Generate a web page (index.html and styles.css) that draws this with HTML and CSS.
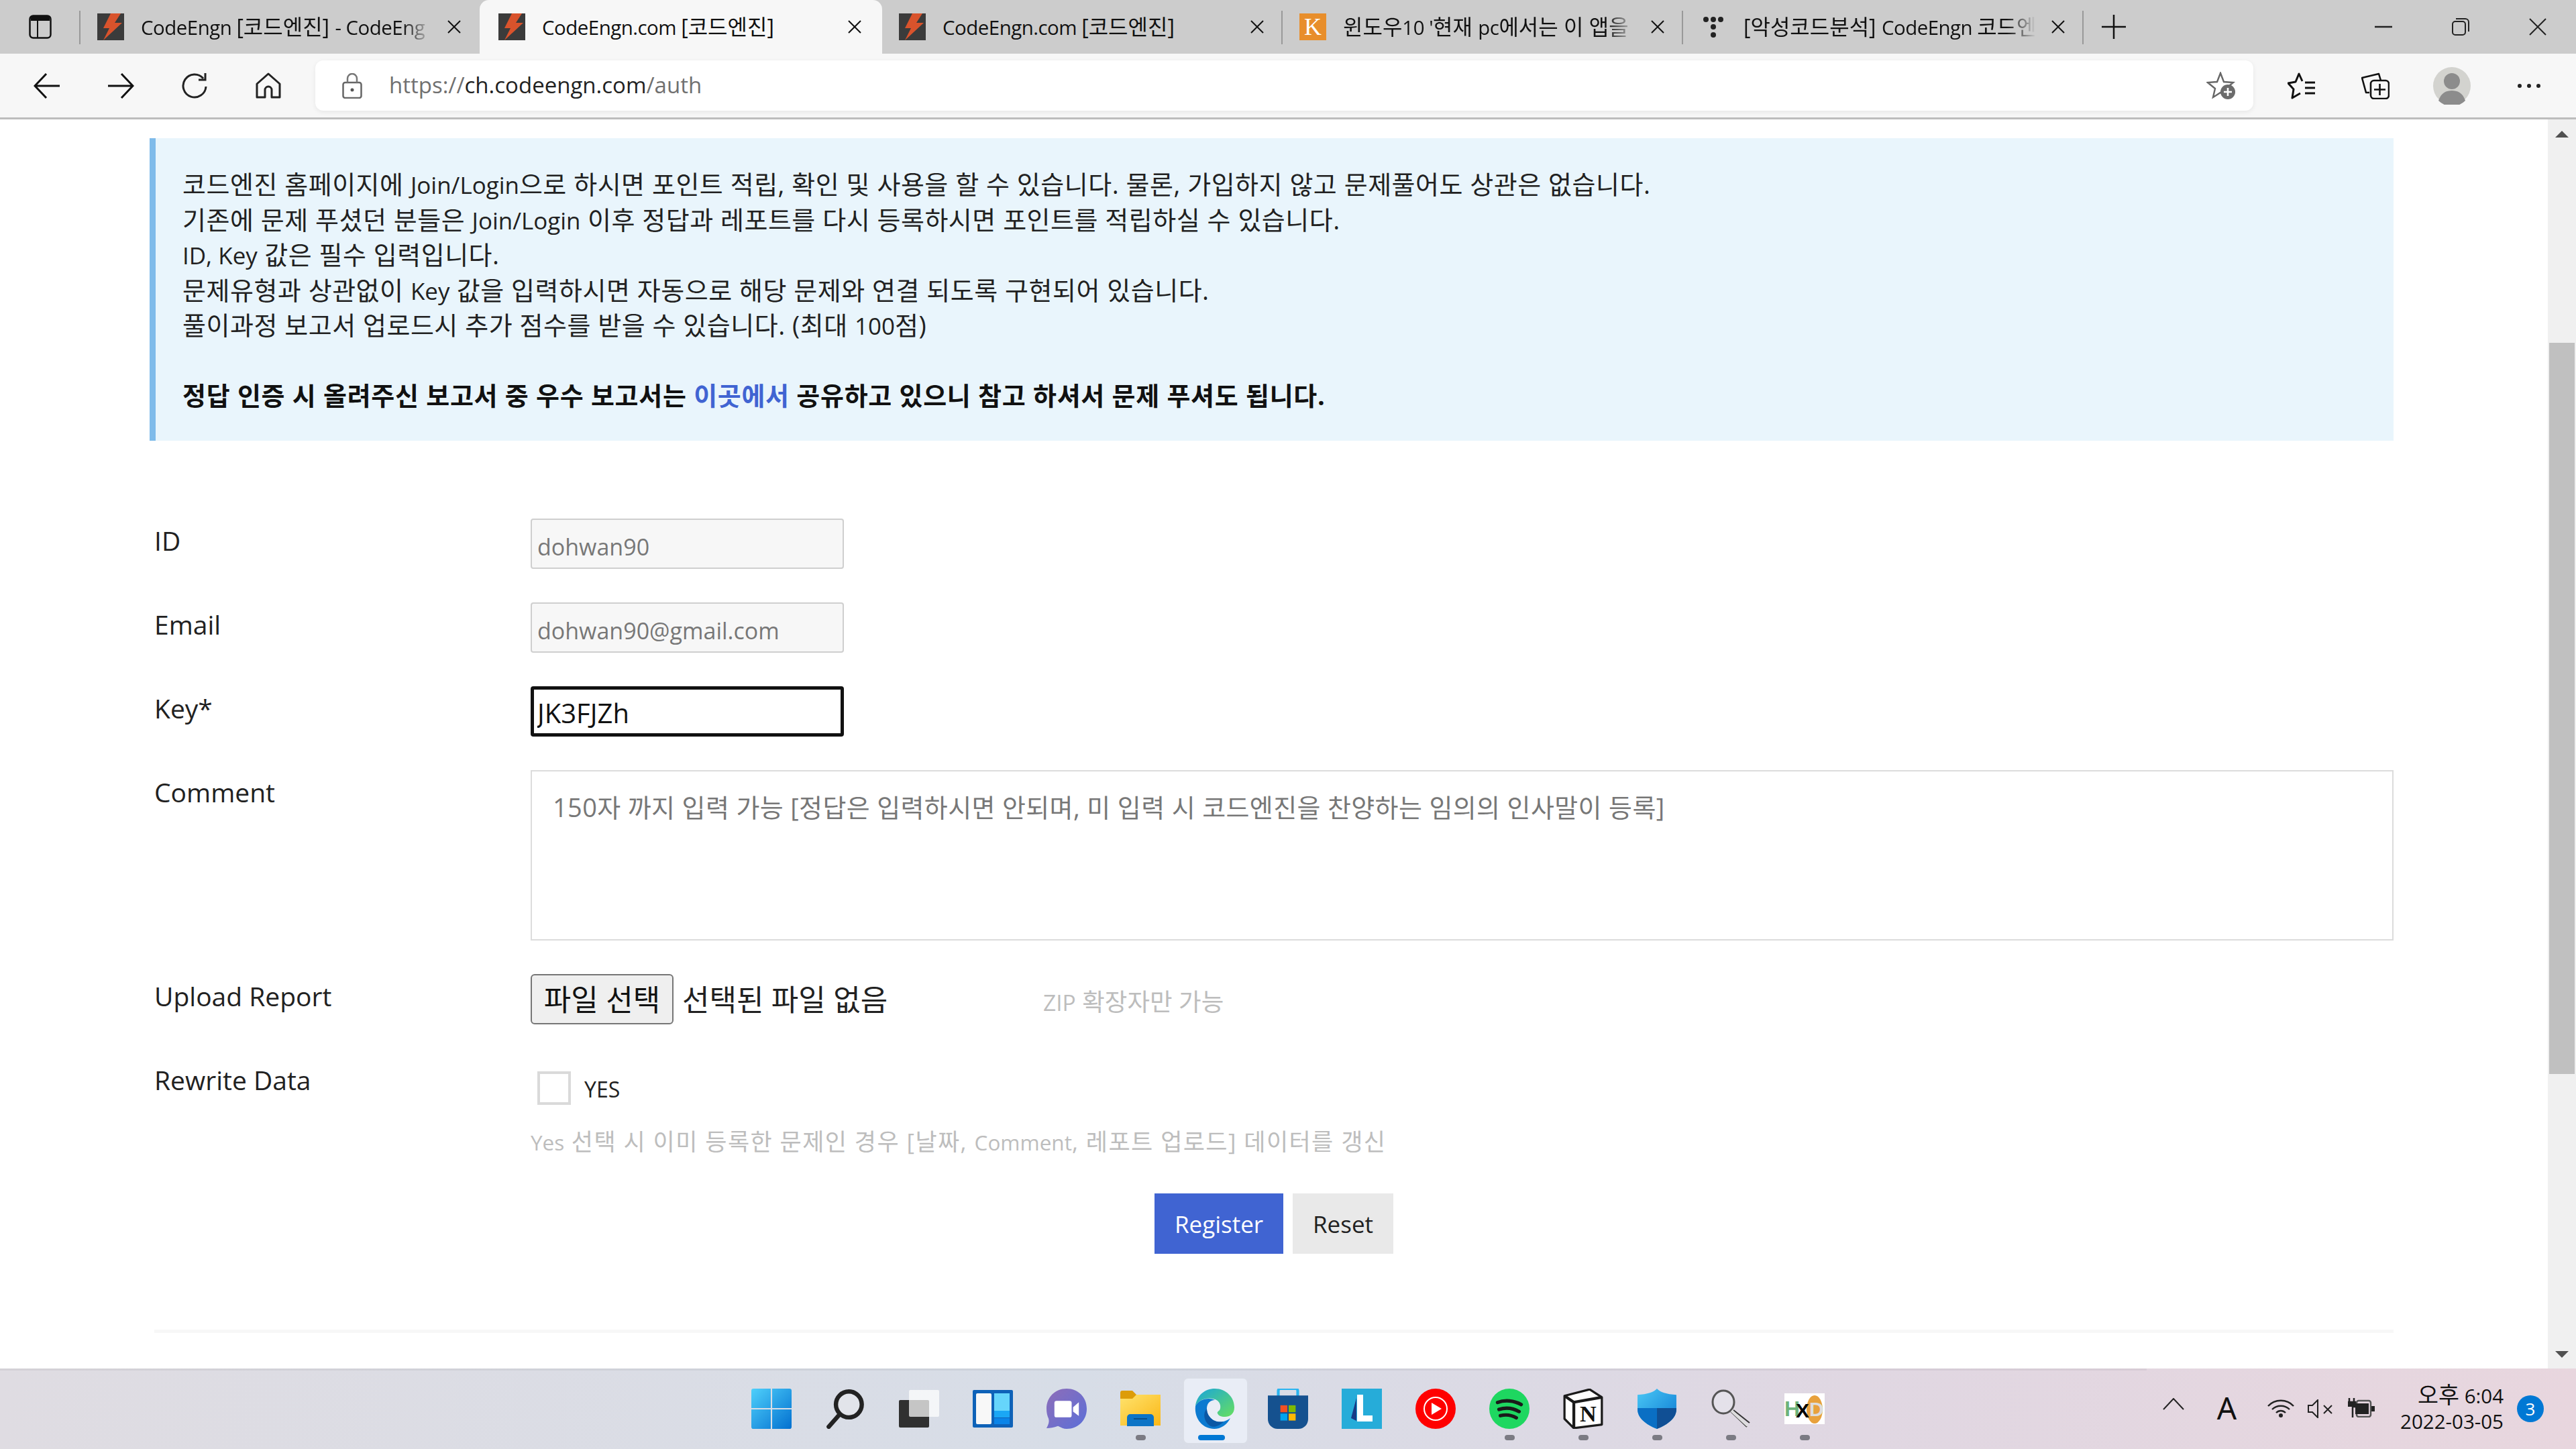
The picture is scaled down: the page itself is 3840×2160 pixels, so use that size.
FILE: index.html
```html
<!DOCTYPE html>
<html lang="ko">
<head>
<meta charset="utf-8">
<title>CodeEngn.com [코드엔진]</title>
<link rel="stylesheet" href="styles.css">
</head>
<body>
<svg class="defs" width="0" height="0">
  <defs>
    <symbol id="ce" viewBox="0 0 40 40"><rect width="40" height="40" fill="#3b3b3b"/><path d="M20 0H35L26 14H37L9 40L18 22H9Z" fill="#d9532c"/></symbol>
    <symbol id="x" viewBox="0 0 22 20"><path d="M2 1L20 19M20 1L2 19" stroke="#111" stroke-width="2" fill="none"/></symbol>
    <linearGradient id="gStart" x1="0" y1="0" x2="1" y2="1"><stop offset="0" stop-color="#4fd0fb"/><stop offset="1" stop-color="#0270d0"/></linearGradient>
    <linearGradient id="gChat" x1="0" y1="0" x2="1" y2="1"><stop offset="0" stop-color="#8e6db8"/><stop offset="1" stop-color="#5b6fd8"/></linearGradient>
    <linearGradient id="gFolder" x1="0" y1="0" x2="1" y2="1"><stop offset="0" stop-color="#fee36e"/><stop offset="1" stop-color="#fbb716"/></linearGradient>
    <linearGradient id="gEdge" x1="0" y1="0" x2="1" y2="1"><stop offset="0" stop-color="#1aa5db"/><stop offset="1" stop-color="#66df5f"/></linearGradient>
    <linearGradient id="gShield" x1="0" y1="0" x2="1" y2="1"><stop offset="0" stop-color="#4bc8f5"/><stop offset="1" stop-color="#0a78d2"/></linearGradient>
  </defs>
</svg>

<header class="tabstrip">
  <div class="side">
    <svg class="i34" viewBox="0 0 34 36"><rect x="1.5" y="1.5" width="31" height="33" rx="5" fill="none" stroke="#111" stroke-width="2.5"/><path d="M3 8V5a3 3 0 0 1 3-3H28a3 3 0 0 1 3 3V9H3Z" fill="#111"/><path d="M13 9V34" stroke="#111" stroke-width="2"/></svg>
  </div>
  <div class="tab tab-first sep-left">
    <svg class="fav"><use href="#ce"/></svg>
    <span class="tab-title fade"><span class="la">CodeEngn </span>[코드엔진] <span class="la">- CodeEng</span></span>
    <svg class="tab-x"><use href="#x"/></svg>
  </div>
  <div class="tab active">
    <svg class="fav"><use href="#ce"/></svg>
    <span class="tab-title"><span class="la">CodeEngn.com </span>[코드엔진]</span>
    <svg class="tab-x"><use href="#x"/></svg>
  </div>
  <div class="tab sep-right">
    <svg class="fav"><use href="#ce"/></svg>
    <span class="tab-title"><span class="la">CodeEngn.com </span>[코드엔진]</span>
    <svg class="tab-x"><use href="#x"/></svg>
  </div>
  <div class="tab sep-right">
    <svg class="fav" viewBox="0 0 40 40"><rect width="40" height="40" fill="#e88e2b"/><text x="20" y="32" text-anchor="middle" class="k-glyph">K</text></svg>
    <span class="tab-title fade">윈도우<span class="la">10 '</span>현재 <span class="la">pc</span>에서는 이 앱을</span>
    <svg class="tab-x"><use href="#x"/></svg>
  </div>
  <div class="tab sep-right">
    <svg class="fav" viewBox="0 0 40 40"><g fill="#222"><circle cx="9" cy="9" r="4"/><circle cx="20" cy="9" r="4"/><circle cx="31" cy="9" r="4"/><circle cx="20" cy="20" r="4"/><circle cx="20" cy="32" r="4"/></g></svg>
    <span class="tab-title fade">[악성코드분석] <span class="la">CodeEngn </span>코드엔</span>
    <svg class="tab-x"><use href="#x"/></svg>
  </div>
  <svg class="newtab" viewBox="0 0 36 36"><path d="M18 0V36M0 18H36" stroke="#111" stroke-width="2.5"/></svg>
  <div class="win">
    <svg class="win-i" viewBox="0 0 26 26"><path d="M0 13H26" stroke="#222" stroke-width="2.5"/></svg>
    <svg class="win-i" viewBox="0 0 26 26"><rect x="1" y="5" width="19" height="20" rx="4" fill="none" stroke="#222" stroke-width="2"/><path d="M6 1H20a5 5 0 0 1 5 5V20" fill="none" stroke="#222" stroke-width="2"/></svg>
    <svg class="win-i" viewBox="0 0 26 26"><path d="M1 1L25 25M25 1L1 25" stroke="#222" stroke-width="2"/></svg>
  </div>
</header>

<nav class="toolbar">
  <div class="tb-btn"><svg class="i40" viewBox="0 0 40 40"><path d="M19 2L2 20L19 38M2 20H39" fill="none" stroke="#111" stroke-width="3"/></svg></div>
  <div class="tb-btn"><svg class="i40" viewBox="0 0 40 40"><path d="M21 2L38 20L21 38M38 20H1" fill="none" stroke="#111" stroke-width="3"/></svg></div>
  <div class="tb-btn"><svg class="i40" viewBox="0 0 40 40"><path d="M33 9A17 17 0 1 0 37 21" fill="none" stroke="#222" stroke-width="3"/><path d="M36 1V11H26" fill="none" stroke="#222" stroke-width="3"/></svg></div>
  <div class="tb-btn"><svg class="i40" viewBox="0 0 40 40"><path d="M20 2L3 17V37H15V26a5 5 0 0 1 10 0V37H37V17Z" fill="none" stroke="#222" stroke-width="3" stroke-linejoin="round"/></svg></div>
  <div class="urlbar">
    <svg class="lock" viewBox="0 0 30 38"><rect x="1.5" y="14" width="27" height="23" rx="3" fill="none" stroke="#666" stroke-width="2.5"/><path d="M8 14V8a7 7 0 0 1 14 0V14" fill="none" stroke="#777" stroke-width="2.5"/><circle cx="15" cy="25" r="2.5" fill="#555"/></svg>
    <span class="url"><span class="dim">https://</span>ch.codeengn.com<span class="dim">/auth</span></span>
    <svg class="star-add" viewBox="0 0 44 42"><path d="M21 2L26 15L40 16L29 25L32 38L21 31L10 38L13 25L2 16L16 15Z" fill="none" stroke="#666" stroke-width="2.4"/><circle cx="32" cy="30" r="11" fill="#6b6b6b"/><path d="M32 24V36M26 30H38" stroke="#fff" stroke-width="2.6"/></svg>
  </div>
  <div class="tb-btn"><svg class="i42" viewBox="0 0 42 40"><path d="M22 13L17 2L12 14L1 16L9 25L7 38L19 31" fill="none" stroke="#111" stroke-width="3" stroke-linejoin="round"/><path d="M26 15H41M26 23H41M26 31H41" stroke="#111" stroke-width="3"/></svg></div>
  <div class="tb-btn"><svg class="i42" viewBox="0 0 42 40"><path d="M12 30H7L1 8L26 2L29 12" fill="none" stroke="#111" stroke-width="2.6" stroke-linejoin="round"/><rect x="14" y="12" width="27" height="27" rx="5" fill="#f7f7f7" stroke="#111" stroke-width="2.6"/><path d="M27.500 17V34M19 25.500H36" stroke="#111" stroke-width="2.6"/></svg></div>
  <div class="tb-btn person"><svg class="avatar" viewBox="0 0 56 56"><circle cx="28" cy="28" r="28" fill="#d3d3cf"/><circle cx="28" cy="21" r="12" fill="#8c8c8c"/><path d="M8 50C12 38 20 35 28 35S44 38 48 50A28 28 0 0 1 8 50Z" fill="#8c8c8c"/></svg></div>
  <div class="tb-btn more"><svg class="dots" viewBox="0 0 36 8"><g fill="#222"><circle cx="4" cy="4" r="3"/><circle cx="18" cy="4" r="3"/><circle cx="32" cy="4" r="3"/></g></svg></div>
</nav>

<div class="viewport">
  <main class="page">
    <section class="notice">
      <p>코드엔진 홈페이지에 <span class="la">Join/Login</span>으로 하시면 포인트 적립, 확인 및 사용을 할 수 있습니다. 물론, 가입하지 않고 문제풀어도 상관은 없습니다.</p>
      <p>기존에 문제 푸셨던 분들은 <span class="la">Join/Login</span> 이후 정답과 레포트를 다시 등록하시면 포인트를 적립하실 수 있습니다.</p>
      <p><span class="la">ID, Key</span> 값은 필수 입력입니다.</p>
      <p>문제유형과 상관없이 <span class="la">Key</span> 값을 입력하시면 자동으로 해당 문제와 연결 되도록 구현되어 있습니다.</p>
      <p>풀이과정 보고서 업로드시 추가 점수를 받을 수 있습니다. (최대 <span class="la">100</span>점)</p>
      <p class="notice-gap"><strong>정답 인증 시 올려주신 보고서 중 우수 보고서는 <a class="link">이곳에서</a> 공유하고 있으니 참고 하셔서 문제 푸셔도 됩니다.</strong></p>
    </section>

    <form class="form">
      <label class="lbl">ID</label>
      <input class="field ro" type="text" value="dohwan90" readonly>
      <label class="lbl">Email</label>
      <input class="field ro" type="text" value="dohwan90@gmail.com" readonly>
      <label class="lbl">Key*</label>
      <input class="field focus" type="text" value="JK3FJZh">
      <label class="lbl">Comment</label>
      <textarea class="comment" placeholder="150자 까지 입력 가능 [정답은 입력하시면 안되며, 미 입력 시 코드엔진을 찬양하는 임의의 인사말이 등록]"></textarea>
      <label class="lbl">Upload Report</label>
      <div class="upload">
        <span class="file-btn">파일 선택</span>
        <span class="file-none">선택된 파일 없음</span>
        <span class="hint zip"><span class="la">ZIP</span> 확장자만 가능</span>
      </div>
      <label class="lbl">Rewrite Data</label>
      <div class="rewrite">
        <div class="check-row"><span class="check"></span><span class="yes">YES</span></div>
        <div class="hint help"><span class="la">Yes</span> 선택 시 이미 등록한 문제인 경우 [날짜, <span class="la">Comment</span>, 레포트 업로드] 데이터를 갱신</div>
      </div>
    </form>

    <div class="actions">
      <span class="btn primary">Register</span>
      <span class="btn plain">Reset</span>
    </div>
    <hr class="rule">
  </main>
  <aside class="scrollbar">
    <span class="arrow up"></span>
    <span class="thumb"></span>
    <span class="arrow down"></span>
  </aside>
</div>

<footer class="taskbar">
  <div class="apps">
    <div class="app"><svg class="ico" viewBox="0 0 58 58"><path d="M0 3a3 3 0 0 1 3-3H28V28H0ZM30 0H55a3 3 0 0 1 3 3V28H30ZM0 30H28V58H3a3 3 0 0 1-3-3ZM30 30H58V55a3 3 0 0 1-3 3H30Z" fill="url(#gStart)"/></svg></div>
    <div class="app"><svg class="ico" viewBox="0 0 56 56"><circle cx="33" cy="22" r="18" fill="#e2e4ea" stroke="#222" stroke-width="6"/><path d="M20 36L5 53" stroke="#222" stroke-width="6" stroke-linecap="round"/></svg></div>
    <div class="app"><svg class="ico" viewBox="0 0 60 56"><rect x="0" y="15" width="45" height="41" rx="2" fill="#303030"/><rect x="15" y="0" width="45" height="40" rx="2" fill="#fff" fill-opacity=".72"/></svg></div>
    <div class="app"><svg class="ico" viewBox="0 0 60 56"><rect width="60" height="56" rx="2" fill="#0e62b8"/><rect x="5" y="5" width="23" height="46" rx="2" fill="#f8f8f8"/><rect x="32" y="5" width="23" height="26" fill="#66d5fb"/><rect x="32" y="31" width="23" height="10" fill="#1aa7f5"/><rect x="32" y="42" width="23" height="9" fill="#0a84e8"/></svg></div>
    <div class="app"><svg class="ico" viewBox="0 0 56 56"><path d="M28 0C44 0 56 12 56 28S44 56 28 56C24 56 20 54 16 52C10 54 5 55 0 55C3 50 4 46 3 42C1 38 0 33 0 28C0 12 12 0 28 0Z" fill="url(#gChat)"/><rect x="11" y="17" width="24" height="23" rx="3" fill="#fff"/><path d="M37 26L45 19V38L37 32Z" fill="#fff"/></svg></div>
    <div class="app"><svg class="ico" viewBox="0 0 60 54"><path d="M0 3a3 3 0 0 1 3-3H18L24 6H60V50H0Z" fill="#dd9c08"/><path d="M0 12H18L24 6H60V52H0Z" fill="url(#gFolder)"/><path d="M10 53V40a5 5 0 0 1 5-5H45a5 5 0 0 1 5 5V53Z" fill="#0c74c6"/><path d="M20 42H40" stroke="#094e8a" stroke-width="2"/></svg><span class="dot"></span></div>
    <div class="app current"><svg class="ico" viewBox="0 0 60 60"><path d="M2 26C4 10 16 0 31 0C48 0 60 13 60 28C60 38 53 42 46 42C40 42 36 40 35 37C34 35 36 34 38 32C40 29 40 22 35 18C28 13 10 12 2 26Z" fill="url(#gEdge)"/><path d="M2 26C8 14 24 13 31 17C24 17 19 22 19 30C19 42 30 52 44 49C47 48 50 47 54 44C49 54 40 60 30 60C14 60 0 46 2 26Z" fill="#0c7ad0"/><path d="M19 30C19 42 30 52 44 49C38 56 28 59 23 55C14 48 13 36 19 30Z" fill="#0b57a4"/></svg><span class="dot live"></span></div>
    <div class="app"><svg class="ico" viewBox="0 0 58 58"><path d="M15 12V3a3 3 0 0 1 3-3H40a3 3 0 0 1 3 3V12" fill="none" stroke="#2ab4f0" stroke-width="4"/><path d="M0 10H58V44a14 14 0 0 1-14 14H14A14 14 0 0 1 0 44Z" fill="#15518f"/><rect x="18" y="24" width="10" height="10" fill="#f25022"/><rect x="30" y="24" width="10" height="10" fill="#7fba00"/><rect x="18" y="36" width="10" height="10" fill="#00a4ef"/><rect x="30" y="36" width="10" height="10" fill="#ffb900"/></svg></div>
    <div class="app"><svg class="ico" viewBox="0 0 60 60"><rect width="60" height="60" fill="#26acd9"/><path d="M14 44L22 14V48Z" fill="#173a86"/><path d="M23 9H32V40H46V49H23Z" fill="#fff"/></svg></div>
    <div class="app"><svg class="ico" viewBox="0 0 60 60"><circle cx="30" cy="30" r="30" fill="#f00"/><circle cx="30" cy="30" r="17" fill="none" stroke="#fff" stroke-width="2"/><path d="M24 21L39 30L24 39Z" fill="#fff"/></svg></div>
    <div class="app"><svg class="ico" viewBox="0 0 58 58"><circle cx="29" cy="29" r="29" fill="#1ed760"/><path d="M12 20C22 16 36 17 46 23M14 30C23 27 34 28 43 33M16 39C24 37 32 38 39 42" fill="none" stroke="#1a1a1a" stroke-width="5" stroke-linecap="round"/></svg><span class="dot"></span></div>
    <div class="app"><svg class="ico" viewBox="0 0 54 56"><path d="M1 10L36 1L53 12V50L14 55L1 42Z" fill="#fff" stroke="#1a1a1a" stroke-width="3" stroke-linejoin="round"/><path d="M1 10L14 19L53 12M14 19V55" fill="none" stroke="#1a1a1a" stroke-width="4"/><text x="34" y="46" text-anchor="middle" class="notion-n">N</text></svg><span class="dot"></span></div>
    <div class="app"><svg class="ico" viewBox="0 0 56 58"><path d="M28 0C32 5 42 8 56 9V30C56 42 44 52 28 58C12 52 0 42 0 30V9C14 8 24 5 28 0Z" fill="url(#gShield)"/><path d="M0 28H28V58C12 52 0 42 0 30Z" fill="#0a6fc4"/><path d="M28 28H56V30C56 42 44 52 28 58Z" fill="#104f94"/></svg><span class="dot"></span></div>
    <div class="app"><svg class="ico" viewBox="0 0 60 58"><ellipse cx="19" cy="19" rx="16" ry="17" fill="#e8e8ee" fill-opacity=".6" stroke="#555" stroke-width="3"/><path d="M30 33L54 56M34 31L58 50" fill="none" stroke="#333" stroke-width="2"/><path d="M31 32L55 54" stroke="#ddd" stroke-width="4"/></svg><span class="dot"></span></div>
    <div class="app"><svg class="ico hxd" viewBox="0 0 60 46"><rect width="60" height="46" fill="#fff"/><ellipse cx="45" cy="24" rx="12" ry="21" fill="#e8a13c"/><text x="0" y="34" class="hxd-h">H</text><text x="17" y="36" class="hxd-x">X</text><text x="37" y="34" class="hxd-d">D</text></svg><span class="dot"></span></div>
  </div>
  <div class="tray">
    <svg class="t-chev" viewBox="0 0 32 18"><path d="M1 17L16 1L31 17" fill="none" stroke="#222" stroke-width="2"/></svg>
    <span class="t-ime">A</span>
    <svg class="t-wifi" viewBox="0 0 40 28"><g fill="none" stroke="#222" stroke-width="2.400"><path d="M1 11C11 0 29 0 39 11"/><path d="M7 16C14 9 26 9 33 16"/><path d="M13 21C17 17 23 17 27 21"/></g><circle cx="20" cy="25" r="3" fill="#222"/></svg>
    <svg class="t-vol" viewBox="0 0 38 28"><path d="M1 9H7L15 1V27L7 19H1Z" fill="none" stroke="#222" stroke-width="2"/><path d="M24 9L36 21M36 9L24 21" stroke="#222" stroke-width="2"/></svg>
    <svg class="t-bat" viewBox="0 0 40 30"><path d="M2 1V7M9 1V7M0 7H11V14H7V30" fill="none" stroke="#222" stroke-width="2.500"/><path d="M0 8H11V14H0Z" fill="#222"/><rect x="13" y="5" width="21" height="24" rx="3" fill="none" stroke="#555" stroke-width="2.500"/><rect x="11" y="9" width="20" height="16" fill="#222"/><rect x="35" y="13" width="5" height="8" fill="#222"/></svg>
    <div class="clock"><div><span class="ko">오후</span> 6:04</div><div>2022-03-05</div></div>
    <span class="badge">3</span>
  </div>
</footer>
</body>
</html>
```
FILE: styles.css
```css
* { box-sizing: border-box; }
html, body { margin: 0; padding: 0; }
body {
  width: 3840px; height: 2160px; overflow: hidden;
  display: flex; flex-direction: column;
  font-family: "Open Sans", "Noto Sans CJK KR", sans-serif;
  font-size: 35px; line-height: 52.5px; color: #212121; background: #fff;
}
.defs { position: absolute; }
.la { font-size: .92em; letter-spacing: 0; line-height: 1; }
.ko { font-size: 1.14em; line-height: 1; }

/* tab strip */
.tabstrip { height: 80px; background: #ccc; display: flex; align-items: stretch; flex: none; }
.side { width: 120px; display: flex; align-items: center; padding-left: 43px; }
.i34 { width: 34px; height: 36px; }
.tab { width: 597px; display: flex; align-items: center; padding-left: 25px; padding-right: 27px; font-size: 32px; color: #111; position: relative; }
.tab-first { width: 595px; }
.sep-left::before, .sep-right::after { content: ""; position: absolute; top: 16px; height: 50px; width: 2px; background: #999; }
.sep-left::before { left: -2px; }
.sep-right::after { right: 0; }
.active { width: 600px; background: #f7f7f7; border-radius: 14px 14px 0 0; padding-left: 28px; padding-right: 30px; }
.fav { width: 40px; height: 40px; flex: none; }
.tab-title { flex: 1; margin-left: 25px; white-space: nowrap; overflow: hidden; line-height: 44px; }
.tab-title .la { letter-spacing: -0.5px; }
.fade { -webkit-mask-image: linear-gradient(90deg, #000 90%, transparent 100%); mask-image: linear-gradient(90deg, #000 90%, transparent 100%); }
.tab-x { width: 22px; height: 20px; flex: none; margin-left: 22px; }
.k-glyph { font-family: "Liberation Serif", serif; font-size: 36px; fill: #fff; }
.newtab { width: 36px; height: 36px; align-self: center; margin-left: 27px; flex: none; }
.win { margin-left: auto; display: flex; align-items: center; padding-right: 44px; gap: 89px; }
.win-i { width: 26px; height: 26px; }

/* toolbar */
.toolbar { height: 98px; flex: none; background: #f7f7f7; border-bottom: 3px solid #bdbdbd; display: flex; align-items: center; padding-left: 15px; }
.tb-btn { width: 110px; height: 95px; display: flex; align-items: center; justify-content: center; flex: none; }
.person { padding-left: 7px; }
.more { margin-left: 9px; }
.i40 { width: 40px; height: 40px; }
.i42 { width: 42px; height: 40px; }
.urlbar { width: 2889px; height: 75px; margin: 0 17px 0 15px; background: #fff; border-radius: 12px; box-shadow: 0 2px 7px rgba(0,0,0,.07); display: flex; align-items: center; padding: 0 26px 0 40px; flex: none; }
.lock { width: 30px; height: 38px; flex: none; }
.url { margin-left: 40px; flex: 1; color: #222; font-size: 33px; }
.dim { color: #707070; }
.star-add { width: 44px; height: 42px; flex: none; }
.avatar { width: 56px; height: 56px; }
.dots { width: 36px; height: 8px; }

/* page */
.viewport { flex: 1; min-height: 0; display: flex; }
.page { flex: 1; min-width: 0; padding: 28px 230px 0 223px; }
.notice { background: #e9f5fc; border-left: 9px solid #7fbbea; padding: 42px 40px; height: 451px; font-size: 38px; letter-spacing: .5px; }
.notice p { margin: 0; }
.notice-gap { margin-top: 52.5px !important; }
.notice strong { font-weight: 700; color: #111; letter-spacing: .7px; }
.link { color: #4064d2; }

.form { margin-top: 116px; padding-left: 7px; display: grid; grid-template-columns: 561px 1fr; row-gap: 50px; }
.lbl { padding-top: 7px; font-size: 39px; }
.field { display: block; width: 467px; height: 75px; border: 2px solid #cfcfcf; border-radius: 4px; padding: 8px 0 0 8px; font: inherit; font-size: 34px; margin: 0; outline: none; }
.ro { background: #f7f7f7; color: #777; }
.focus { border: 5px solid #111; background: #fff; color: #111; padding: 4px 0 0 5px; font-size: 40px; }
.comment { display: block; width: 100%; height: 254px; border: 2px solid #dcdcdc; padding: 27px 31px; font: inherit; font-size: 38px; resize: none; outline: none; margin: 0; letter-spacing: .35px; }
.comment::placeholder { color: #777; opacity: 1; }
.upload { display: flex; align-items: center; height: 75px; }
.file-btn { width: 213px; height: 75px; border: 2px solid #767676; border-radius: 6px; background: #efefef; display: flex; align-items: center; justify-content: center; color: #111; font-size: 44px; padding-top: 2px; }
.file-none { margin-left: 13px; width: 538px; font-size: 44px; color: #212121; padding-top: 2px; }
.hint { color: #bdbdbd; }
.zip { font-size: 36.500px; padding-top: 8px; }
.rewrite { min-height: 125px; }
.check-row { display: flex; align-items: center; padding: 20px 0 0 10px; height: 70px; gap: 20px; font-size: 32px; }
.yes { padding-top: 5px; }
.check { width: 50px; height: 50px; border: 4px solid #dadada; background: #fff; flex: none; }
.help { margin-top: 29px; font-size: 35px; letter-spacing: 1.4px; }
.help .la { font-size: .9em; }

.actions { display: flex; justify-content: center; gap: 14px; margin-top: 50px; padding-left: 7px; }
.btn { height: 90px; padding-top: 4px; display: flex; align-items: center; justify-content: center; }
.primary { width: 192px; background: #4064d2; color: #fff; }
.plain { width: 150px; background: #e9e9e9; color: #212121; }
.rule { border: 0; height: 5px; background: #f7f7f7; margin: 113px 0 0 7px; }

/* scrollbar */
.scrollbar { width: 42px; flex: none; background: #f0f0f0; display: flex; flex-direction: column; align-items: center; padding: 17px 0 16px; }
.arrow { width: 0; height: 0; border-left: 10px solid transparent; border-right: 10px solid transparent; flex: none; }
.up { border-bottom: 10px solid #505050; }
.down { border-top: 10px solid #505050; margin-top: auto; }
.thumb { width: 38px; height: 1090px; background: #c0c0c0; margin-top: 306px; flex: none; }

/* taskbar */
.taskbar {
  height: 120px; flex: none; display: flex; position: relative;
  background:
    linear-gradient(rgba(0,0,0,.05), rgba(0,0,0,.05)) 0 0 / 3200px 3px no-repeat,
    linear-gradient(90deg, #dfdce2 0%, #d7dde7 42%, #e0d7e2 72%, #e8d6de 100%);
}
.apps { display: flex; padding-left: 1095px; }
.app { width: 110px; height: 120px; display: flex; align-items: center; justify-content: center; position: relative; flex: none; }
.ico { width: 60px; height: 60px; }
.hxd { height: 46px; }
.notion-n { font-family: "Liberation Serif", serif; font-weight: 700; font-size: 32px; fill: #111; }
.hxd-h { font-family: "Liberation Sans", sans-serif; font-weight: 700; font-size: 32px; fill: #6db37a; }
.hxd-x { font-family: "Liberation Sans", sans-serif; font-weight: 700; font-size: 30px; fill: #000; }
.hxd-d { font-family: "Liberation Sans", sans-serif; font-weight: 700; font-size: 30px; fill: #ddd; }
.current::before { content: ""; position: absolute; left: 8px; top: 13px; width: 94px; height: 96px; background: #e9edf6; border: 2px solid #d9dde6; border-radius: 8px; }
.current .ico { position: relative; }
.dot { position: absolute; left: 48px; top: 99px; width: 15px; height: 8px; border-radius: 4px; background: #7b7b83; }
.live { left: 31px; width: 40px; background: #0078d4; }

.tray { margin-left: auto; display: flex; align-items: center; padding-right: 48px; color: #111; }
.t-chev { width: 32px; height: 18px; margin-top: -14px; }
.t-ime { margin-left: 47px; width: 33px; font-size: 46px; line-height: 46px; text-align: center; margin-top: -4px; font-family: "Noto Sans", sans-serif; }
.t-wifi { margin-left: 44px; width: 40px; height: 28px; margin-top: -2px; }
.t-vol { margin-left: 20px; width: 38px; height: 28px; }
.t-bat { margin-left: 22px; width: 40px; height: 30px; margin-top: -4px; }
.clock { margin-left: 24px; width: 168px; text-align: right; font-size: 29.500px; line-height: 38px; }
.badge { margin-left: 20px; width: 40px; height: 40px; border-radius: 50%; background: #0078d4; color: #fff; font-size: 26px; line-height: 40px; text-align: center; }
```
